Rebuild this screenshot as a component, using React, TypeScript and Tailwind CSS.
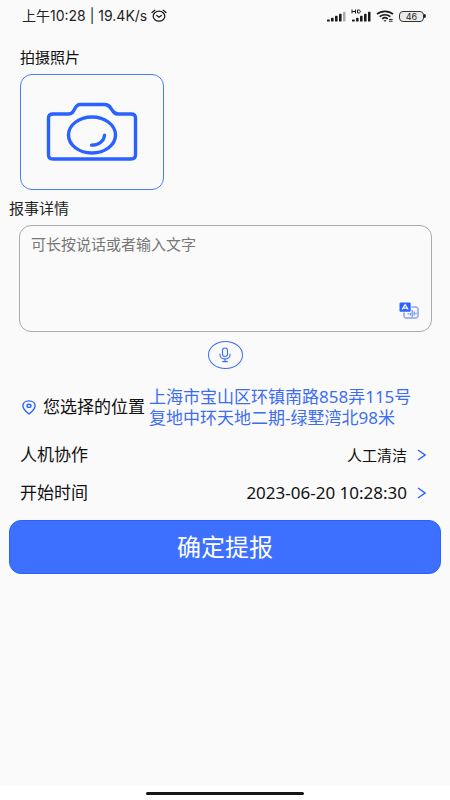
import React from "react";

function AlarmIcon() {
  return (
    <svg width="16" height="14" viewBox="0 0 16 14" fill="none" stroke="#1c1c1c" strokeWidth="1.3" strokeLinecap="round" aria-hidden="true">
      <ellipse cx="8" cy="7.2" rx="5.800" ry="5" />
      <path d="M5.7 6.4 8 8.2l2.4-1.7M1 3.6 3.8 1.2M15 3.6 12.2 1.2" />
    </svg>
  );
}

function Signal({ faded = false, hd = false }: { faded?: boolean; hd?: boolean }) {
  return (
    <svg width="20" height="14" viewBox="0 0 20 14" fill="#1c1c1c" aria-hidden="true">
      {hd && (
        <path d="M1 .5v4M4.500 .5v4M1 2.500h3.500M6.500 1v3h1.300c2 0 2-3 0-3z" fill="none" stroke="#1c1c1c" strokeWidth="1" />
      )}
      <rect x="1" y="10.4" width="2.8" height="2.200" rx=".7" />
      <rect x="5" y="8.8" width="2.6" height="3.8" rx=".7" />
      <rect x="9" y="6.8" width="2.6" height="5.8" rx=".7" />
      <rect x="13" y="4.8" width="2.6" height="7.8" rx=".7" />
      <rect x="17" y="2.8" width="2.5" height="9.8" rx=".7" fill={faded ? "#ababab" : "#1c1c1c"} />
    </svg>
  );
}

function WifiIcon() {
  return (
    <svg width="18" height="14" viewBox="0 0 18 14" fill="none" stroke="#1c1c1c" strokeWidth="1.6" aria-hidden="true">
      <path d="M1 5.2C5.300 1.400 12.700 1.400 17 5.200M3.600 7.700c3-2.600 7.800-2.600 10.800 0M6.200 9.800c1.600-1.400 4-1.400 5.600 0" />
      <path d="m7.300 11.200 1.700 1.600 1.700-1.600z" fill="#1c1c1c" stroke="none" />
      <path d="M13 10.400h3.600M13 12.200h3.600" strokeWidth="1" />
    </svg>
  );
}

function Battery() {
  return (
    <div className="flex items-center">
      <div className="flex h-[11px] w-[25px] items-center justify-center rounded-[4px] border border-[#333] bg-[#ececec] font-['Inter',sans-serif] text-[9px] leading-none text-[#1c1c1c]">
        46
      </div>
      <div className="h-1 w-0.5 rounded-r bg-[#1c1c1c]" />
    </div>
  );
}

function CameraIcon() {
  return (
    <svg width="92" height="60" viewBox="0 0 92 60" fill="none" stroke="#2962ff" strokeLinecap="round" strokeLinejoin="round" aria-hidden="true">
      <path
        d="M7 12h15.500c3.500 0 4.500-1.800 6-4.800S31 2.500 34 2.500h25c3.500 0 4.500 1.700 6.500 4.700S68.500 12 72 12h13c2.800 0 4.500 1.500 4.500 4v37c0 2.500-1.700 4-4.500 4H7c-2.800 0-4.500-1.500-4.500-4V16c0-2.500 1.700-4 4.500-4z"
        strokeWidth="3.400"
      />
      <ellipse cx="46" cy="33" rx="23.500" ry="18" strokeWidth="3.400" />
      <path d="M58.500 33c0 5.500-5.500 10.200-13 10.200" strokeWidth="3.200" />
    </svg>
  );
}

function TranslateIcon() {
  return (
    <svg width="20" height="17" viewBox="0 0 20 17" fill="none" aria-hidden="true">
      <path d="M12.500 5H17c1.200 0 2 .7 2 1.800v7.400c0 1.100-.8 1.800-2 1.800H7c-1.200 0-2-.7-2-1.800V10.500" stroke="#4a76ee" strokeWidth="1" />
      <rect x=".5" y=".5" width="11.200" height="9.200" rx="1.200" fill="#2962ff" />
      <path d="M3 7.500 6.100 2.700l3.100 4.800M4.200 6.200H8" stroke="#fff" strokeWidth="1.200" />
      <path d="M9.200 11.200v1.500M11.300 10.800v2.600M13.200 8v7M15.200 9.500v4M17 10.700v1.600" stroke="#4a76ee" strokeWidth="1" />
    </svg>
  );
}

function MicIcon() {
  return (
    <svg width="12" height="16" viewBox="0 0 12 16" fill="none" stroke="#3d6df2" strokeWidth="1.100" strokeLinecap="round" aria-hidden="true">
      <rect x="3.500" y="1" width="5" height="8.500" rx="2.500" />
      <path d="M1 7v1c0 2.300 2 3.900 5 3.900S11 10.300 11 8V7M6 12v2.500M3.600 14.600h4.800" />
    </svg>
  );
}

function PinIcon() {
  return (
    <svg width="14" height="15" viewBox="0 0 14 15" fill="none" stroke="#2962ff" strokeWidth="1.400" strokeLinejoin="round" aria-hidden="true">
      <path d="M7 14C4 11.600.9 9 .9 5.900.9 3 3.500.9 7 .9s6.100 2.100 6.100 5C13.100 9 10 11.600 7 14z" />
      <ellipse cx="7" cy="5.800" rx="2" ry="1.600" />
    </svg>
  );
}

function Chevron() {
  return (
    <svg width="9" height="12" viewBox="0 0 9 12" fill="none" stroke="#2962ff" strokeWidth="1.400" aria-hidden="true">
      <path d="m1 1 7 5-7 5" />
    </svg>
  );
}

function PickerRow({ label, children }: { label: string; children: React.ReactNode }) {
  return (
    <button type="button" className="flex h-[38px] w-full items-center justify-between pr-6 pl-5 text-[17px] leading-5">
      <span>{label}</span>
      <span className="flex items-center gap-2.5">
        {children}
        <Chevron />
      </span>
    </button>
  );
}

export default function App() {
  return (
    <div className="flex min-h-screen flex-col bg-[#fafafa] font-['Noto_Sans','Noto_Sans_CJK_SC',sans-serif] text-[#111]">
      <header className="flex h-8 items-center justify-between pr-6 pl-[22px]">
        <div className="flex items-center gap-1 font-['Inter','Noto_Sans_CJK_SC',sans-serif] text-sm leading-5 whitespace-nowrap text-[#222]">
          <span>上午10:28 | 19.4K/s</span>
          <AlarmIcon />
        </div>
        <div className="flex items-center gap-[5px]">
          <Signal faded />
          <Signal hd />
          <WifiIcon />
          <Battery />
        </div>
      </header>

      <main className="flex flex-1 flex-col">
        <h2 className="mt-[15px] px-5 text-[15px] leading-5">拍摄照片</h2>
        <button
          type="button"
          aria-label="拍摄照片"
          className="mt-[7px] ml-5 flex h-[116px] w-36 items-center justify-center rounded-xl border border-[#4a7cff]"
        >
          <CameraIcon />
        </button>

        <label htmlFor="detail" className="mt-2 px-[9px] text-[15px] leading-5 text-[#222]">
          报事详情
        </label>
        <div className="relative mt-[7px] mr-[18px] ml-[19px]">
          <textarea
            id="detail"
            placeholder="可长按说话或者输入文字"
            className="block h-[107px] w-full resize-none rounded-xl border border-[#aaa] bg-transparent px-[11px] py-2 text-[15px] leading-5 outline-none placeholder:text-[#777]"
          />
          <button type="button" aria-label="翻译" className="absolute right-[13px] bottom-[13px]">
            <TranslateIcon />
          </button>
        </div>
        <button
          type="button"
          aria-label="语音输入"
          className="mt-[9px] flex h-7 w-[35px] items-center justify-center self-center rounded-[50%] border border-[#3d6df2]"
        >
          <MicIcon />
        </button>

        <div className="mt-[17px] flex items-center pr-5 pl-[22px] text-[17px]">
          <PinIcon />
          <span className="ml-[7px] shrink-0 leading-5">您选择的位置</span>
          <a href="#location" className="ml-1 leading-[21px] text-[#3d6df2]">
            上海市宝山区环镇南路858弄115号
            <br />
            复地中环天地二期-绿墅湾北98米
          </a>
        </div>

        <div className="mt-2">
          <PickerRow label="人机协作">
            <span className="text-[15px]">人工清洁</span>
          </PickerRow>
          <PickerRow label="开始时间">
            <time dateTime="2023-06-20T10:28:30">2023-06-20 10:28:30</time>
          </PickerRow>
        </div>

        <button
          type="submit"
          className="mx-[9px] mt-2 h-[54px] rounded-xl border border-[#2962ff] bg-[#3d70ff] text-2xl text-white"
        >
          确定提报
        </button>
      </main>

      <footer className="flex h-3.5 items-center justify-center bg-white">
        <div className="h-[3px] w-[35%] rounded-full bg-[#161616]" />
      </footer>
    </div>
  );
}
